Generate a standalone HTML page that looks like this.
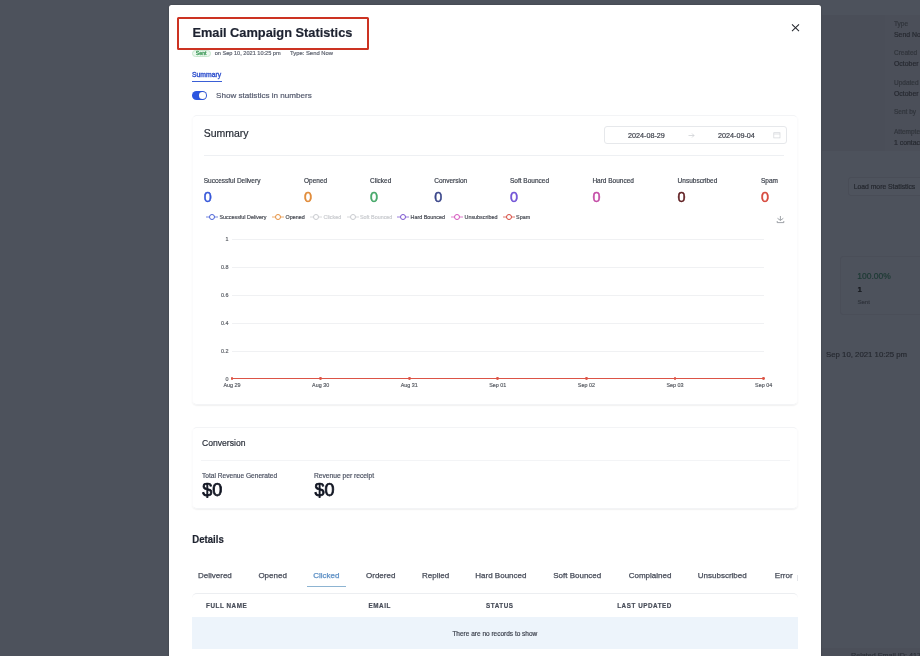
<!DOCTYPE html>
<html><head><meta charset="utf-8">
<style>
html,body{margin:0;padding:0;width:920px;height:656px;overflow:hidden;background:#4d525c;font-family:"Liberation Sans",sans-serif;position:relative;}
.a{position:absolute;}
.t{position:absolute;white-space:nowrap;line-height:1;-webkit-text-stroke-width:0.18px;}
</style></head><body>
<div style="position:absolute;left:0;top:0;width:920px;height:656px;will-change:transform;">
<div class="a" style="left:822px;top:15px;width:98px;height:136px;background:#4a4e58;"></div>
<div class="a" style="left:885px;top:15px;width:35px;height:136px;background:#4b4f59;"></div>
<div class="t" style="left:894px;top:20.81px;font-size:6.5px;font-weight:400;color:#30343b;">Type</div>
<div class="t" style="left:894px;top:32.37px;font-size:6.9px;font-weight:400;color:#262930;">Send Now</div>
<div class="t" style="left:894px;top:49.51px;font-size:6.5px;font-weight:400;color:#30343b;">Created</div>
<div class="t" style="left:894px;top:61.17px;font-size:6.9px;font-weight:400;color:#262930;">October 1</div>
<div class="t" style="left:894px;top:79.51px;font-size:6.5px;font-weight:400;color:#30343b;">Updated</div>
<div class="t" style="left:894px;top:90.77px;font-size:6.9px;font-weight:400;color:#262930;">October 1</div>
<div class="t" style="left:894px;top:108.51px;font-size:6.5px;font-weight:400;color:#30343b;">Sent by</div>
<div class="t" style="left:894px;top:128.51px;font-size:6.5px;font-weight:400;color:#30343b;">Attempted</div>
<div class="t" style="left:894px;top:140.37px;font-size:6.9px;font-weight:400;color:#262930;">1 contact</div>
<div class="a" style="left:848px;top:177px;width:80px;height:19px;border:1px solid #494d57;border-radius:3px;box-sizing:border-box;background:#4e535d;"></div>
<div class="t" style="left:853.7px;top:184.05px;font-size:6.8px;font-weight:400;color:#25282f;-webkit-text-stroke:0.2px #25282f;">Load more Statistics</div>
<div class="a" style="left:840px;top:256px;width:85px;height:59px;border:1px solid #4a4e58;border-radius:3px;box-sizing:border-box;"></div>
<div class="t" style="left:857.3px;top:272.02px;font-size:8.5px;font-weight:400;color:#1d3a34;-webkit-text-stroke:0.2px #1d3a34;">100.00%</div>
<div class="t" style="left:857.5px;top:286.24px;font-size:8px;font-weight:700;color:#15171c;">1</div>
<div class="t" style="left:857.5px;top:299.43px;font-size:6px;font-weight:400;color:#30343c;">Sent</div>
<div class="t" style="left:826px;top:350.91px;font-size:7.8px;font-weight:400;color:#25282f;-webkit-text-stroke:0.15px #25282f;">Sep 10, 2021 10:25 pm</div>
<div class="a" style="left:821px;top:648px;width:99px;height:8px;background:#4b4f59;"></div>
<div class="t" style="left:851px;top:652.42px;font-size:7.2px;font-weight:400;color:#2c3038;-webkit-text-stroke:0.15px #2c3038;">Related Email ID: 4172</div>
<div class="a" style="left:169.4px;top:5px;width:651.6px;height:660px;background:#fff;border-radius:2.5px;box-shadow:0 0 2px rgba(0,0,0,0.25);"></div>
<div class="a" style="left:177.3px;top:17.2px;width:191.4px;height:32.9px;border:2.8px solid #cc3322;box-sizing:border-box;border-radius:1.5px;"></div>
<div class="t" style="left:192.4px;top:26.98px;font-size:12.8px;font-weight:700;color:#1d2230;transform-origin:0 10.82px;transform:scaleY(1.06);">Email Campaign Statistics</div>
<svg class="a" style="left:789px;top:22px" width="12" height="12" viewBox="0 0 12 12"><path d="M3 2.4L10 9.2M10 2.4L3 9.2" stroke="#25282e" stroke-width="1.05" fill="none"/></svg>
<div class="a" style="left:192px;top:49.6px;width:18.5px;height:7.9px;border:0.7px solid #c6e6cc;border-radius:5px;background:#ecf8ef;box-sizing:border-box;"></div>
<div class="t" style="left:195.8px;top:51.11px;font-size:5.2px;font-weight:400;color:#3f9a5a;-webkit-text-stroke:0.3px #3f9a5a;">Sent</div>
<div class="t" style="left:214.7px;top:50.77px;font-size:5.6px;font-weight:400;color:#5f6470;">on Sep 10, 2021 10:25 pm</div>
<div class="t" style="left:290px;top:50.55px;font-size:5.86px;font-weight:400;color:#5f6470;">Type: Send Now</div>
<div class="t" style="left:192px;top:72.25px;font-size:6.8px;font-weight:400;color:#3656cf;-webkit-text-stroke:0.4px #3656cf;">Summary</div>
<div class="a" style="left:192px;top:80.8px;width:29.6px;height:1.3px;background:#3a5fd6;"></div>
<div class="a" style="left:192px;top:91px;width:15px;height:8.6px;background:#2d56e0;border-radius:5px;"></div>
<div class="a" style="left:199.4px;top:92.0px;width:6.6px;height:6.6px;background:#fff;border-radius:50%;box-shadow:0 0 0.8px rgba(20,30,80,0.6);"></div>
<div class="t" style="left:216px;top:91.96px;font-size:8.1px;font-weight:400;color:#50566a;">Show statistics in numbers</div>
<div class="a" style="left:192px;top:114.5px;width:606px;height:290px;border:1px solid #f3f4f6;border-left-color:#fbfbfc;border-right-color:#fbfbfc;border-radius:5px;box-sizing:border-box;box-shadow:0 1px 1.5px rgba(0,0,0,0.06);"></div>
<div class="t" style="left:203.7px;top:127.63px;font-size:10.5px;font-weight:400;color:#262b35;">Summary</div>
<div class="a" style="left:204px;top:155px;width:580px;height:1px;background:#eef0f3;"></div>
<div class="a" style="left:604px;top:126.3px;width:182.5px;height:18.2px;border:1px solid #e6e8eb;border-radius:3px;box-sizing:border-box;"></div>
<div class="t" style="left:628px;top:131.52px;font-size:7.2px;font-weight:400;color:#3a3e48;">2024-08-29</div>
<svg class="a" style="left:688px;top:132px" width="7" height="7" viewBox="0 0 7 7"><path d="M0.5 3.5H6M4 1.5L6 3.5L4 5.5" fill="none" stroke="#c8cbd0" stroke-width="0.7"/></svg>
<div class="t" style="left:718px;top:131.52px;font-size:7.2px;font-weight:400;color:#3a3e48;">2024-09-04</div>
<svg class="a" style="left:773px;top:132px" width="8" height="7" viewBox="0 0 8 7"><rect x="0.8" y="0.7" width="6.2" height="5.2" fill="none" stroke="#d3d6da" stroke-width="0.7"/><line x1="0.8" y1="2" x2="7" y2="2" stroke="#d3d6da" stroke-width="0.7"/></svg>
<div class="t" style="left:203.7px;top:177.91px;font-size:6.5px;font-weight:400;color:#3b404b;">Successful Delivery</div>
<div class="t" style="left:203.7px;top:189.63px;font-size:14.4px;font-weight:400;color:#3657d9;-webkit-text-stroke:0.5px #3657d9;">0</div>
<div class="t" style="left:304px;top:177.91px;font-size:6.5px;font-weight:400;color:#3b404b;">Opened</div>
<div class="t" style="left:304px;top:189.63px;font-size:14.4px;font-weight:400;color:#e08a37;-webkit-text-stroke:0.5px #e08a37;">0</div>
<div class="t" style="left:370px;top:177.91px;font-size:6.5px;font-weight:400;color:#3b404b;">Clicked</div>
<div class="t" style="left:370px;top:189.63px;font-size:14.4px;font-weight:400;color:#45a768;-webkit-text-stroke:0.5px #45a768;">0</div>
<div class="t" style="left:434.3px;top:177.91px;font-size:6.5px;font-weight:400;color:#3b404b;">Conversion</div>
<div class="t" style="left:434.3px;top:189.63px;font-size:14.4px;font-weight:400;color:#3a468a;-webkit-text-stroke:0.5px #3a468a;">0</div>
<div class="t" style="left:510px;top:177.91px;font-size:6.5px;font-weight:400;color:#3b404b;">Soft Bounced</div>
<div class="t" style="left:510px;top:189.63px;font-size:14.4px;font-weight:400;color:#7052d6;-webkit-text-stroke:0.5px #7052d6;">0</div>
<div class="t" style="left:592.4px;top:177.91px;font-size:6.5px;font-weight:400;color:#3b404b;">Hard Bounced</div>
<div class="t" style="left:592.4px;top:189.63px;font-size:14.4px;font-weight:400;color:#c44ca6;-webkit-text-stroke:0.5px #c44ca6;">0</div>
<div class="t" style="left:677.6px;top:177.91px;font-size:6.5px;font-weight:400;color:#3b404b;">Unsubscribed</div>
<div class="t" style="left:677.6px;top:189.63px;font-size:14.4px;font-weight:400;color:#5e1c1f;-webkit-text-stroke:0.5px #5e1c1f;">0</div>
<div class="t" style="left:761px;top:177.91px;font-size:6.5px;font-weight:400;color:#3b404b;">Spam</div>
<div class="t" style="left:761px;top:189.63px;font-size:14.4px;font-weight:400;color:#d6483c;-webkit-text-stroke:0.5px #d6483c;">0</div>
<svg class="a" style="left:206px;top:213.3px" width="12" height="8" viewBox="0 0 12 8"><line x1="0" y1="4" x2="12" y2="4" stroke="#4a62d6" stroke-width="0.75"/><circle cx="6" cy="4" r="2.5" fill="#fff" stroke="#4a62d6" stroke-width="1"/></svg>
<div class="t" style="left:219.5px;top:215.34px;font-size:5.4px;font-weight:400;color:#484c55;">Successful Delivery</div>
<svg class="a" style="left:272px;top:213.3px" width="12" height="8" viewBox="0 0 12 8"><line x1="0" y1="4" x2="12" y2="4" stroke="#e6913f" stroke-width="0.75"/><circle cx="6" cy="4" r="2.5" fill="#fff" stroke="#e6913f" stroke-width="1"/></svg>
<div class="t" style="left:285.5px;top:215.34px;font-size:5.4px;font-weight:400;color:#484c55;">Opened</div>
<svg class="a" style="left:310px;top:213.3px" width="12" height="8" viewBox="0 0 12 8"><line x1="0" y1="4" x2="12" y2="4" stroke="#c9cbcf" stroke-width="0.75"/><circle cx="6" cy="4" r="2.5" fill="#fff" stroke="#c9cbcf" stroke-width="1"/></svg>
<div class="t" style="left:323.5px;top:215.34px;font-size:5.4px;font-weight:400;color:#c9cbcf;">Clicked</div>
<svg class="a" style="left:346.5px;top:213.3px" width="12" height="8" viewBox="0 0 12 8"><line x1="0" y1="4" x2="12" y2="4" stroke="#c9cbcf" stroke-width="0.75"/><circle cx="6" cy="4" r="2.5" fill="#fff" stroke="#c9cbcf" stroke-width="1"/></svg>
<div class="t" style="left:360.0px;top:215.34px;font-size:5.4px;font-weight:400;color:#c9cbcf;">Soft Bounced</div>
<svg class="a" style="left:397px;top:213.3px" width="12" height="8" viewBox="0 0 12 8"><line x1="0" y1="4" x2="12" y2="4" stroke="#7b55d0" stroke-width="0.75"/><circle cx="6" cy="4" r="2.5" fill="#fff" stroke="#7b55d0" stroke-width="1"/></svg>
<div class="t" style="left:410.5px;top:215.34px;font-size:5.4px;font-weight:400;color:#484c55;">Hard Bounced</div>
<svg class="a" style="left:451px;top:213.3px" width="12" height="8" viewBox="0 0 12 8"><line x1="0" y1="4" x2="12" y2="4" stroke="#d553bd" stroke-width="0.75"/><circle cx="6" cy="4" r="2.5" fill="#fff" stroke="#d553bd" stroke-width="1"/></svg>
<div class="t" style="left:464.5px;top:215.34px;font-size:5.4px;font-weight:400;color:#484c55;">Unsubscribed</div>
<svg class="a" style="left:502.6px;top:213.3px" width="12" height="8" viewBox="0 0 12 8"><line x1="0" y1="4" x2="12" y2="4" stroke="#d6483c" stroke-width="0.75"/><circle cx="6" cy="4" r="2.5" fill="#fff" stroke="#d6483c" stroke-width="1"/></svg>
<div class="t" style="left:516.1px;top:215.34px;font-size:5.4px;font-weight:400;color:#484c55;">Spam</div>
<svg class="a" style="left:776px;top:214px" width="10" height="10" viewBox="0 0 10 10"><path d="M4.4 2V6.3M1.5 4.3L4.4 6.4L7.3 4.3M1.2 7V8.6H7.8V7" fill="none" stroke="#80858c" stroke-width="0.75"/></svg>
<div class="a" style="left:232px;top:238.7px;width:532px;height:0.8px;background:#f0f1f3;"></div>
<div class="t" style="right:691.5px;top:237.34px;font-size:5.4px;font-weight:400;color:#5b5f66;">1</div>
<div class="a" style="left:232px;top:266.7px;width:532px;height:0.8px;background:#f0f1f3;"></div>
<div class="t" style="right:691.5px;top:265.34px;font-size:5.4px;font-weight:400;color:#5b5f66;">0.8</div>
<div class="a" style="left:232px;top:294.7px;width:532px;height:0.8px;background:#f0f1f3;"></div>
<div class="t" style="right:691.5px;top:293.34px;font-size:5.4px;font-weight:400;color:#5b5f66;">0.6</div>
<div class="a" style="left:232px;top:322.7px;width:532px;height:0.8px;background:#f0f1f3;"></div>
<div class="t" style="right:691.5px;top:321.34px;font-size:5.4px;font-weight:400;color:#5b5f66;">0.4</div>
<div class="a" style="left:232px;top:350.7px;width:532px;height:0.8px;background:#f0f1f3;"></div>
<div class="t" style="right:691.5px;top:349.34px;font-size:5.4px;font-weight:400;color:#5b5f66;">0.2</div>
<div class="t" style="right:691.5px;top:377.34px;font-size:5.4px;font-weight:400;color:#5b5f66;">0</div>
<div class="a" style="left:232px;top:378px;width:531.6px;height:1.3px;background:#dc5446;"></div>
<div class="a" style="left:230.6px;top:377.3px;width:2.8px;height:2.8px;background:#dc5446;border-radius:50%;"></div>
<div class="t" style="left:232.0px;transform:translateX(-50%);top:383.14px;font-size:5.4px;font-weight:400;color:#5b5f66;">Aug 29</div>
<div class="a" style="left:319.20000000000005px;top:377.3px;width:2.8px;height:2.8px;background:#dc5446;border-radius:50%;"></div>
<div class="t" style="left:320.6px;transform:translateX(-50%);top:383.14px;font-size:5.4px;font-weight:400;color:#5b5f66;">Aug 30</div>
<div class="a" style="left:407.8px;top:377.3px;width:2.8px;height:2.8px;background:#dc5446;border-radius:50%;"></div>
<div class="t" style="left:409.2px;transform:translateX(-50%);top:383.14px;font-size:5.4px;font-weight:400;color:#5b5f66;">Aug 31</div>
<div class="a" style="left:496.4px;top:377.3px;width:2.8px;height:2.8px;background:#dc5446;border-radius:50%;"></div>
<div class="t" style="left:497.79999999999995px;transform:translateX(-50%);top:383.14px;font-size:5.4px;font-weight:400;color:#5b5f66;">Sep 01</div>
<div class="a" style="left:585.0px;top:377.3px;width:2.8px;height:2.8px;background:#dc5446;border-radius:50%;"></div>
<div class="t" style="left:586.4px;transform:translateX(-50%);top:383.14px;font-size:5.4px;font-weight:400;color:#5b5f66;">Sep 02</div>
<div class="a" style="left:673.6px;top:377.3px;width:2.8px;height:2.8px;background:#dc5446;border-radius:50%;"></div>
<div class="t" style="left:675.0px;transform:translateX(-50%);top:383.14px;font-size:5.4px;font-weight:400;color:#5b5f66;">Sep 03</div>
<div class="a" style="left:762.1999999999999px;top:377.3px;width:2.8px;height:2.8px;background:#dc5446;border-radius:50%;"></div>
<div class="t" style="left:763.5999999999999px;transform:translateX(-50%);top:383.14px;font-size:5.4px;font-weight:400;color:#5b5f66;">Sep 04</div>
<div class="a" style="left:192px;top:426.5px;width:606px;height:82.5px;border:1px solid #f3f4f6;border-left-color:#fbfbfc;border-right-color:#fbfbfc;border-radius:5px;box-sizing:border-box;box-shadow:0 1px 1.5px rgba(0,0,0,0.06);"></div>
<div class="t" style="left:202px;top:439.23px;font-size:8.6px;font-weight:400;color:#2a2f3a;transform-origin:0 7.27px;transform:scaleY(1.06);">Conversion</div>
<div class="a" style="left:201px;top:459.5px;width:589px;height:1px;background:#f3f4f6;"></div>
<div class="t" style="left:202px;top:472.72px;font-size:6.6px;font-weight:400;color:#4b5161;">Total Revenue Generated</div>
<div class="t" style="left:202.3px;top:481.09px;font-size:18px;font-weight:400;color:#111522;-webkit-text-stroke:0.75px #111522;">$0</div>
<div class="t" style="left:313.9px;top:472.64px;font-size:6.7px;font-weight:400;color:#4b5161;">Revenue per receipt</div>
<div class="t" style="left:314.6px;top:481.09px;font-size:18px;font-weight:400;color:#111522;-webkit-text-stroke:0.75px #111522;">$0</div>
<div class="t" style="left:192.3px;top:534.59px;font-size:9.6px;font-weight:700;color:#1f2430;transform-origin:0 8.11px;transform:scaleY(1.12);">Details</div>
<div class="a" style="left:192px;top:560px;width:605px;height:30px;overflow:hidden;">
<div class="t" style="left:6px;top:11.84px;font-size:8px;color:#474c59;-webkit-text-stroke:0.25px #474c59;">Delivered</div>
<div class="t" style="left:66.39999999999998px;top:11.84px;font-size:8px;color:#474c59;-webkit-text-stroke:0.25px #474c59;">Opened</div>
<div class="t" style="left:121.19999999999999px;top:11.84px;font-size:8px;color:#5b8ec4;-webkit-text-stroke:0.25px #5b8ec4;">Clicked</div>
<div class="t" style="left:174px;top:11.84px;font-size:8px;color:#474c59;-webkit-text-stroke:0.25px #474c59;">Ordered</div>
<div class="t" style="left:230px;top:11.84px;font-size:8px;color:#474c59;-webkit-text-stroke:0.25px #474c59;">Replied</div>
<div class="t" style="left:283.3px;top:11.84px;font-size:8px;color:#474c59;-webkit-text-stroke:0.25px #474c59;">Hard Bounced</div>
<div class="t" style="left:361.20000000000005px;top:11.84px;font-size:8px;color:#474c59;-webkit-text-stroke:0.25px #474c59;">Soft Bounced</div>
<div class="t" style="left:436.70000000000005px;top:11.84px;font-size:8px;color:#474c59;-webkit-text-stroke:0.25px #474c59;">Complained</div>
<div class="t" style="left:505.79999999999995px;top:11.84px;font-size:8px;color:#474c59;-webkit-text-stroke:0.25px #474c59;">Unsubscribed</div>
<div class="t" style="left:582.8px;top:11.84px;font-size:8px;color:#474c59;-webkit-text-stroke:0.25px #474c59;">Error</div>
</div>
<div class="a" style="left:797px;top:575px;width:0.7px;height:6px;background:#e4e6ea;"></div>
<div class="a" style="left:307px;top:585.9px;width:38.6px;height:1.3px;background:#8db4d2;"></div>
<div class="a" style="left:192px;top:593.3px;width:606px;height:70px;border-top:1px solid #eceef1;border-radius:5px 5px 0 0;box-sizing:border-box;"></div>
<div class="t" style="left:206px;top:602.68px;font-size:6.3px;font-weight:700;color:#474c58;letter-spacing:0.55px;">FULL NAME</div>
<div class="t" style="left:368.5px;top:602.68px;font-size:6.3px;font-weight:700;color:#474c58;letter-spacing:0.55px;">EMAIL</div>
<div class="t" style="left:486px;top:602.68px;font-size:6.3px;font-weight:700;color:#474c58;letter-spacing:0.55px;">STATUS</div>
<div class="t" style="left:617.2px;top:602.68px;font-size:6.3px;font-weight:700;color:#474c58;letter-spacing:0.55px;">LAST UPDATED</div>
<div class="a" style="left:192px;top:616.5px;width:606px;height:32.5px;background:#edf4fb;"></div>
<div class="t" style="left:452.4px;top:630.51px;font-size:6.5px;font-weight:400;color:#3c414d;">There are no records to show</div>
</div>
</body></html>
